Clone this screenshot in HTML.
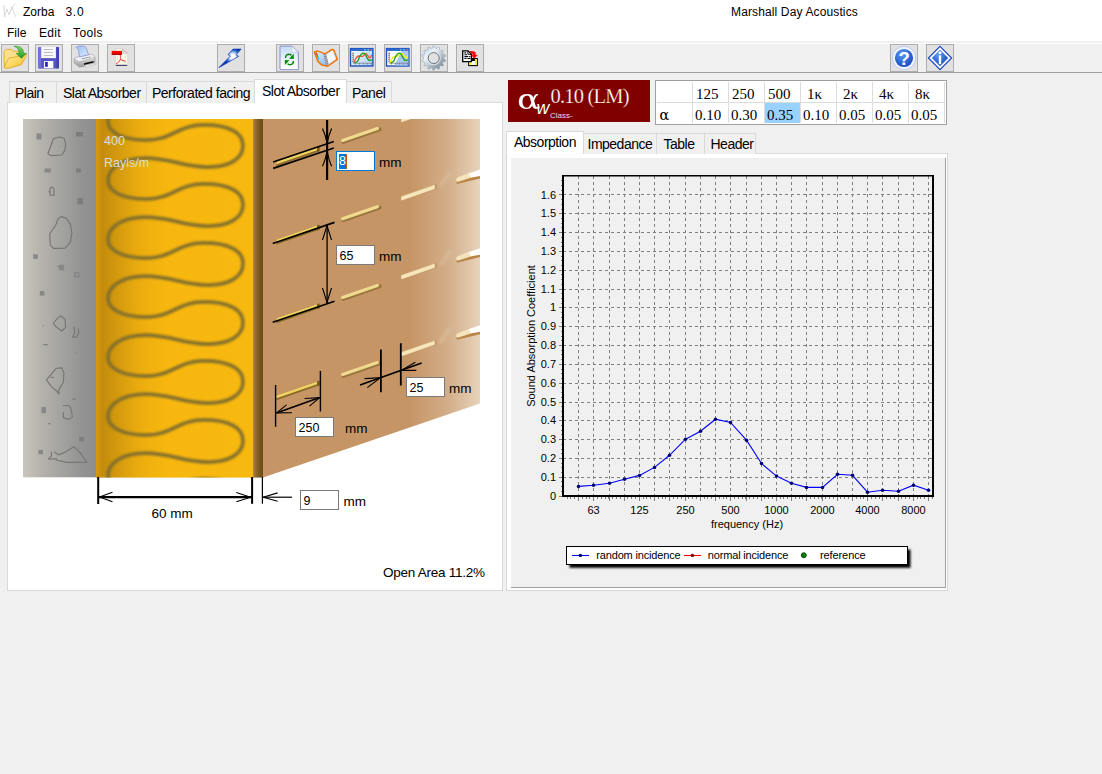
<!DOCTYPE html>
<html><head><meta charset="utf-8"><title>Zorba 3.0</title>
<style>
html,body{margin:0;padding:0;}
body{width:1102px;height:774px;background:#f0f0f0;position:relative;overflow:hidden;font-family:"Liberation Sans",sans-serif;font-size:14px;color:#000;}
.abs{position:absolute;}
#top{left:0;top:0;width:1102px;height:41px;background:#fff;border-bottom:2px solid #f0f0f0;box-shadow:0 1px 0 #fff;}
.ui{font-family:"Liberation Sans",sans-serif;font-size:12px;position:absolute;white-space:nowrap;}
#tbline{left:0;top:72px;width:1102px;height:1px;background:#a0a0a0;}
.tbtn{position:absolute;top:44px;width:26px;height:26px;background:#e1e1e1;border:1px solid #adadad;box-sizing:content-box;}
.tab{position:absolute;box-sizing:border-box;border:1px solid #d9d9d9;border-bottom:none;background:#f0f0f0;font-size:14px;white-space:nowrap;letter-spacing:-0.5px;}
.tab.sel{background:#fff;}
.tab span{position:absolute;}
.page{position:absolute;box-sizing:border-box;background:#fff;border:1px solid #d9d9d9;}
.inp{position:absolute;box-sizing:border-box;background:#fff;border:1px solid #7a7a7a;font-size:12.5px;}
.inp span{position:absolute;left:2.5px;top:2.7px;}
.lbl{position:absolute;font-size:13.5px;white-space:nowrap;}
</style></head><body>
<div id="top" class="abs"></div>
<div class="ui" style="left:23px;top:5px;">Zorba</div>
<div class="ui" style="left:65.5px;top:5px;letter-spacing:0.7px;">3.0</div>
<svg class="abs" style="left:3px;top:3px;" width="16" height="16" viewBox="0 0 16 16"><path d="M1 2 L1.6 14 L4 6 L6 12 L9 4 L12.5 1 M9 4 L10.5 9 L13 14" fill="none" stroke="#d4d4d0" stroke-width="0.9"/></svg>
<div class="ui" style="left:731px;top:5px;letter-spacing:0.13px;">Marshall Day Acoustics</div>
<div class="ui" style="left:7px;top:26px;">File</div>
<div class="ui" style="left:39px;top:26px;letter-spacing:0.3px;">Edit</div>
<div class="ui" style="left:73px;top:26px;letter-spacing:0.4px;">Tools</div>
<div id="tbline" class="abs"></div>
<!--TOOLBAR-->
<svg width="0" height="0" style="position:absolute"><defs>
<linearGradient id="gFold" x1="0" y1="0" x2="1" y2="1"><stop offset="0" stop-color="#fff3b0"/><stop offset="0.6" stop-color="#fbd45a"/><stop offset="1" stop-color="#e8a818"/></linearGradient>
<linearGradient id="gGreen" x1="0" y1="0" x2="0" y2="1"><stop offset="0" stop-color="#7fd66a"/><stop offset="1" stop-color="#1f9a1f"/></linearGradient>
<linearGradient id="gBolt" x1="1" y1="0" x2="0" y2="1"><stop offset="0" stop-color="#1d4fc4"/><stop offset="0.45" stop-color="#9cc4f4"/><stop offset="1" stop-color="#0a2ea0"/></linearGradient>
<linearGradient id="gPage" x1="0" y1="0" x2="1" y2="1"><stop offset="0" stop-color="#cfe0fa"/><stop offset="0.6" stop-color="#f4f8ff"/><stop offset="1" stop-color="#ffffff"/></linearGradient>
<radialGradient id="gHelp" cx="0.4" cy="0.3" r="0.8"><stop offset="0" stop-color="#5b9cf0"/><stop offset="0.6" stop-color="#2a62d0"/><stop offset="1" stop-color="#1a48b8"/></radialGradient>
<linearGradient id="gGear" x1="0" y1="0" x2="1" y2="1"><stop offset="0" stop-color="#e8eef4"/><stop offset="0.5" stop-color="#b4c0cc"/><stop offset="1" stop-color="#8a96a4"/></linearGradient>
<linearGradient id="gPrn" x1="0" y1="0" x2="0" y2="1"><stop offset="0" stop-color="#f4f4f4"/><stop offset="1" stop-color="#9a9a9a"/></linearGradient>
<linearGradient id="gPaper" x1="0" y1="0" x2="1" y2="1"><stop offset="0" stop-color="#9fc0f4"/><stop offset="1" stop-color="#d8ecff"/></linearGradient>
</defs></svg>
<!-- open -->
<div class="tbtn" style="left:1px;"><svg width="26" height="26" viewBox="1 1 26 26">
<path d="M3 7.5 L4.8 5.4 L10.5 5.4 L12.3 7.2 L19 7.2 L19 13 L8 14.5 L3.4 23.5 Z" fill="#fbe08c" stroke="#e4a41c" stroke-width="0.8" stroke-linejoin="round"/>
<path d="M7.8 14.1 L18.6 12.3 L25.4 9.6 L25.1 12.3 L20.4 20.7 L7.8 24.2 L3.9 24.2 L3.2 23 Z" fill="url(#gFold)" stroke="#e4a41c" stroke-width="0.8" stroke-linejoin="round"/>
<path d="M12.9 2.1 L18.6 2.7 Q21.6 4.5 22.2 6.3 L22.5 9.3 L25.4 9.3 L20.4 14.4 L15 9.3 L18 9.3 L17.7 6.9 Q17.2 5 16.2 3.9 Z" fill="url(#gGreen)" stroke="#1c8c1c" stroke-width="0.5" stroke-linejoin="round"/>
</svg></div>
<!-- save -->
<div class="tbtn" style="left:35px;"><svg width="26" height="26" viewBox="1 1 26 26">
<path d="M3.2 4.2 Q3.2 3 4.4 3 L22.7 3 Q23.9 3 23.9 4.2 L23.9 23.3 Q23.9 24.5 22.7 24.5 L4.4 24.5 Q3.2 24.5 3.2 23.3 Z" fill="#5555c2"/>
<path d="M3.2 4.2 Q3.2 3 4.4 3 L6.2 3 L6.2 24.5 L4.4 24.5 Q3.2 24.5 3.2 23.3 Z" fill="#7272d8"/>
<path d="M21.6 3 L22.7 3 Q23.9 3 23.9 4.2 L23.9 23.3 Q23.9 24.5 22.7 24.5 L21.6 24.5 Z" fill="#4040aa"/>
<rect x="6.2" y="3" width="14.7" height="11.1" fill="#f8f8fb"/>
<rect x="8.9" y="5" width="9" height="0.9" fill="#b4b4bc"/><rect x="8.9" y="8" width="9" height="0.9" fill="#b4b4bc"/><rect x="8.9" y="11" width="9" height="0.9" fill="#b4b4bc"/>
<rect x="8.9" y="17.1" width="9.3" height="7" fill="#f4f4fa"/>
<path d="M13 17.1 L18.2 17.1 L18.2 24.1 L11.5 24.1 Z" fill="#fdfdfd"/>
<rect x="10.1" y="18" width="2.7" height="4.8" fill="#2828a0"/>
</svg></div>
<!-- print -->
<div class="tbtn" style="left:71px;"><svg width="26" height="26" viewBox="1 1 26 26">
<path d="M3.1 14.7 L8.5 12.3 L21.1 10.2 L24 12.9 L24 18.3 L12.7 22.5 L8.5 23 L3.1 18.9 Z" fill="url(#gPrn)" stroke="#8c8c8c" stroke-width="0.6" stroke-linejoin="round"/>
<path d="M3.1 14.7 L8.5 12.3 L21.1 10.2 L24 12.9 L11.5 16.8 L8 17.6 Z" fill="#f0f0f0" stroke="#a8a8a8" stroke-width="0.4" stroke-linejoin="round"/>
<path d="M4.9 3.3 L8.2 2.1 L13.6 2.1 Q15 3.5 15.7 5.1 L17.5 10.8 L8.5 12.9 L7.6 6.9 Q7.4 5.6 6.7 5.1 Z" fill="url(#gPaper)" stroke="#8484d8" stroke-width="0.7" stroke-linejoin="round"/>
<path d="M10.6 14.3 L19.3 12.4 L19.9 13.2 L11.2 15.2 Z" fill="#9aa0b4"/>
<path d="M13 19.2 L22.6 17.1 L22.6 18.6 L13 21 Z" fill="#0a0a0a"/>
<path d="M12.7 21.4 L25.2 18.9 L25.2 20.3 L15.7 23.4 Z" fill="#e4e4e4" stroke="#a0a0a0" stroke-width="0.3"/>
</svg></div>
<!-- pdf -->
<div class="tbtn" style="left:107px;"><svg width="26" height="26" viewBox="1 1 26 26">
<path d="M8.3 4.8 L15.4 4.8 L20.8 9.3 L20.8 21.6 L8.3 21.6 Z" fill="#fdf9ea" stroke="#c4c4c0" stroke-width="0.6"/>
<path d="M15.2 4.9 L15.2 9.3 L20.6 9.3 Z" fill="#d8d8d8" stroke="#a8a8a8" stroke-width="0.4"/>
<rect x="8.9" y="20.8" width="11.2" height="1" fill="#20205c"/>
<rect x="4.7" y="6.9" width="10.2" height="3.9" fill="#f20000"/><rect x="4.7" y="9.8" width="10.2" height="1" fill="#a80000"/>
<path d="M13.1 11 C13.6 13 13.8 14 13.4 15.3 C12.5 17.5 10.8 19 9.2 19.6 M13.4 15.3 C15 16.4 16.8 17 18.6 17.2" fill="none" stroke="#e83030" stroke-width="1"/>
<path d="M10 12.5 L10.4 15.5 M17 19 L19 18.6 M18.5 11.5 L18.7 14" stroke="#8cc88c" stroke-width="0.6" opacity="0.7"/>
</svg></div>
<!-- bolt -->
<div class="tbtn" style="left:217px;"><svg width="26" height="26" viewBox="1 1 26 26">
<defs><radialGradient id="gBolt2" gradientUnits="userSpaceOnUse" cx="15.8" cy="12.6" r="9"><stop offset="0" stop-color="#ffffff"/><stop offset="0.2" stop-color="#ffffff"/><stop offset="0.42" stop-color="#bcd8f8"/><stop offset="0.72" stop-color="#2a66d0"/><stop offset="1" stop-color="#0030b0"/></radialGradient></defs>
<path d="M16.1 5.1 L24.1 5.1 L19.1 10.8 L21.7 12.3 L2 23.6 L13.4 12 L11 10.5 Z" fill="url(#gBolt2)" stroke="#0a34b0" stroke-width="0.7" stroke-linejoin="miter"/>
</svg></div>
<!-- refresh -->
<div class="tbtn" style="left:276px;"><svg width="26" height="26" viewBox="1 1 26 26">
<defs><linearGradient id="gPg2" x1="0" y1="0" x2="0" y2="1"><stop offset="0" stop-color="#c4daf8"/><stop offset="0.7" stop-color="#f4f8ff"/><stop offset="1" stop-color="#ffffff"/></linearGradient></defs>
<path d="M4 2.1 L15.7 2.1 L22.4 8.1 L22.4 25.6 L4 25.6 Z" fill="url(#gPg2)" stroke="#8888c4" stroke-width="0.9"/>
<path d="M15.7 2.3 Q16.5 6 15.5 8.3 Q19 7.4 22.2 8.2 Z" fill="#f4f8ff" stroke="#a8acd8" stroke-width="0.4"/>
<path d="M9.6 14 Q9.4 10.4 13.2 10.3 Q14.6 10.4 15.4 11.2" fill="none" stroke="#0c8a0c" stroke-width="1.5"/>
<path d="M13 14.7 L17.6 9.8 L17.9 15 Z" fill="#0c8a0c"/>
<path d="M17.4 17 Q17.6 20.6 13.8 20.7 Q12.4 20.6 11.6 19.8" fill="none" stroke="#0c8a0c" stroke-width="1.5"/>
<path d="M8.8 15.9 L13.5 16.2 L8.9 21.1 Z" fill="#0c8a0c"/>
</svg></div>
<!-- book -->
<div class="tbtn" style="left:312px;"><svg width="26" height="26" viewBox="1 1 26 26">
<defs><linearGradient id="gBk" x1="0" y1="0" x2="0.3" y2="1"><stop offset="0" stop-color="#eef4fc"/><stop offset="1" stop-color="#8cbcf0"/></linearGradient></defs>
<path d="M2.3 8.1 L5 6.9 L13.4 9.9 L19.9 5.4 L21.7 5.7 L25.3 15.3 L15.7 22.2 L9.8 21 L5.6 17.1 L3.8 11.7 Z" fill="url(#gBk)" stroke="#f07404" stroke-width="1.5" stroke-linejoin="round"/>
<path d="M14.2 10.6 L20.6 6.6 L24 15 L16 20.8 Z" fill="#f2f6fd"/>
<path d="M11.3 10.2 L14 9.9 L16.6 19.9 L13.9 20.4 Z" fill="#787884"/>
<path d="M11.6 11.6 l2.4 -.5 M12.1 13.5 l2.4 -.5 M12.6 15.4 l2.4 -.5 M13.1 17.3 l2.4 -.5 M13.6 19.2 l2.4 -.5" stroke="#dcdce6" stroke-width="0.8"/>
<path d="M4.2 8.6 L5.2 11" stroke="#e02020" stroke-width="1.3"/><path d="M5.2 11 L6 13.4" stroke="#30b030" stroke-width="1.3"/><path d="M6 13.4 L6.8 15.6" stroke="#50a8f0" stroke-width="1.3"/>
</svg></div>
<!-- chart1 -->
<div class="tbtn" style="left:348px;"><svg width="26" height="26" viewBox="1 1 26 26">
<defs><linearGradient id="gWin" x1="0" y1="0" x2="1" y2="0.6"><stop offset="0" stop-color="#ffffff"/><stop offset="1" stop-color="#b4d4f8"/></linearGradient></defs>
<rect x="2.5" y="4.6" width="22.4" height="17.4" fill="url(#gWin)" stroke="#1c50b8" stroke-width="1.4"/>
<rect x="2.5" y="4.6" width="22.4" height="2.4" fill="#2c6cd0"/>
<rect x="16.3" y="4.9" width="1.4" height="1.7" fill="#7cc0f4"/><rect x="19.5" y="4.9" width="1.4" height="1.7" fill="#7cc0f4"/><rect x="22.4" y="4.9" width="1.5" height="1.7" fill="#f06838"/>
<path d="M5.3 8.1 L5.3 19.2 L24.3 19.2" fill="none" stroke="#808080" stroke-width="0.8"/>
<path d="M4.2 9.5 h1.2 M4.2 11.5 h1.2 M4.2 13.5 h1.2 M4.2 15.5 h1.2 M4.2 17.5 h1.2 M7.4 19.2 v1.3 M11.4 19.2 v1.3 M15.4 19.2 v1.3 M19.4 19.2 v1.3 M23.4 19.2 v1.3" stroke="#707070" stroke-width="0.8"/>
<path d="M6.1 18 C7 16.5 7.6 14.5 8.5 13.5 C9.3 12.6 9.8 12.2 10.6 12 C12 11.8 13.5 12.8 14.8 12.3 C16.2 11.8 16.8 9.5 18.1 9.6 C19.6 9.8 20.4 13.6 21.7 13.8 C22.6 13.9 23 12.3 23.4 11.4" fill="none" stroke="#ff5030" stroke-width="1.3" stroke-linecap="round"/>
<path d="M7 18.6 C8 18.4 9 18 9.7 17.1 C10.6 15.9 10.8 14.2 11.5 12.9 C12.3 11.4 13.2 9.8 14.5 9.3 C15.4 9 16.3 9.2 16.9 9.9 C18.2 11.4 19 14.8 20.5 15.9 C21.4 16.5 22.6 16.3 23.4 16.2" fill="none" stroke="#18a018" stroke-width="1.3" stroke-linecap="round"/>
</svg></div>
<!-- chart2 -->
<div class="tbtn" style="left:384px;"><svg width="26" height="26" viewBox="1 1 26 26">
<rect x="2.5" y="4.6" width="22.4" height="17.4" fill="#ffffff" stroke="#1c50b8" stroke-width="1.4"/>
<path d="M10.5 21.4 L13 16 L16.5 9.5 L17.5 7 L24.3 7 L24.3 21.4 Z" fill="#a8c8f0"/>
<rect x="2.5" y="4.6" width="22.4" height="2.4" fill="#2c6cd0"/>
<rect x="16.3" y="4.9" width="1.4" height="1.7" fill="#7cc0f4"/><rect x="19.5" y="4.9" width="1.4" height="1.7" fill="#7cc0f4"/><rect x="22.4" y="4.9" width="1.5" height="1.7" fill="#f06838"/>
<path d="M5.3 8.1 L5.3 19.2 L24.3 19.2" fill="none" stroke="#808080" stroke-width="0.8"/>
<path d="M4.2 9.5 h1.2 M4.2 11.5 h1.2 M4.2 13.5 h1.2 M4.2 15.5 h1.2 M4.2 17.5 h1.2 M7.4 19.2 v1.3 M11.4 19.2 v1.3 M15.4 19.2 v1.3 M19.4 19.2 v1.3 M23.4 19.2 v1.3" stroke="#707070" stroke-width="0.8"/>
<path d="M6.1 18.6 C7 17 7.8 14.8 8.8 13.6 C9.6 12.7 10.4 12.3 11.4 12.4 C12.8 12.4 14 12.4 15 11.5 C16 10.6 16.8 9.4 17.8 9.6 C19.4 10 20.6 13.6 22 14 C22.8 14 23.2 12.8 23.6 12" fill="none" stroke="#f8f010" stroke-width="1.5" stroke-linecap="round"/>
<path d="M7 18.8 C8 18.5 9 18.1 9.7 17.2 C10.6 16 10.8 14.2 11.5 12.9 C12.3 11.4 13.2 9.8 14.5 9.3 C15.4 9 16.3 9.2 16.9 9.9 C18.2 11.4 19 14.8 20.5 15.9 C21.4 16.5 22.6 16.3 23.4 16.2" fill="none" stroke="#18a018" stroke-width="1.3" stroke-linecap="round"/>
</svg></div>
<!-- gear -->
<div class="tbtn" style="left:420px;"><svg width="26" height="26" viewBox="1 1 26 26">
<defs><linearGradient id="gGear2" x1="0.15" y1="0.1" x2="0.85" y2="0.9"><stop offset="0" stop-color="#c8dcf0"/><stop offset="0.3" stop-color="#eef4fa"/><stop offset="0.6" stop-color="#b8c4d0"/><stop offset="1" stop-color="#7c8690"/></linearGradient></defs>
<g transform="translate(13.7 14.1)">
<path d="M10.20 0.00 L10.15 1.01 L11.84 1.93 L11.51 3.40 L9.58 3.50 L9.19 4.43 L8.71 5.31 L9.83 6.88 L8.89 8.06 L7.11 7.31 L6.36 7.97 L5.54 8.56 L5.88 10.46 L4.52 11.12 L3.24 9.67 L2.27 9.94 L1.28 10.12 L0.75 11.98 L-0.75 11.98 L-1.28 10.12 L-2.27 9.94 L-3.24 9.67 L-4.52 11.12 L-5.88 10.46 L-5.54 8.56 L-6.36 7.97 L-7.11 7.31 L-8.89 8.06 L-9.83 6.88 L-8.71 5.31 L-9.19 4.43 L-9.58 3.50 L-11.51 3.40 L-11.84 1.93 L-10.15 1.01 L-10.20 0.00 L-10.15 -1.01 L-11.84 -1.93 L-11.51 -3.40 L-9.58 -3.50 L-9.19 -4.43 L-8.71 -5.31 L-9.83 -6.88 L-8.89 -8.06 L-7.11 -7.31 L-6.36 -7.97 L-5.54 -8.56 L-5.88 -10.46 L-4.52 -11.12 L-3.24 -9.67 L-2.27 -9.94 L-1.28 -10.12 L-0.75 -11.98 L0.75 -11.98 L1.28 -10.12 L2.27 -9.94 L3.24 -9.67 L4.52 -11.12 L5.88 -10.46 L5.54 -8.56 L6.36 -7.97 L7.11 -7.31 L8.89 -8.06 L9.83 -6.88 L8.71 -5.31 L9.19 -4.43 L9.58 -3.50 L11.51 -3.40 L11.84 -1.93 L10.15 -1.01 Z" fill="url(#gGear2)" stroke="#98a4b0" stroke-width="0.6" stroke-linejoin="round"/>
<circle r="6.6" fill="none" stroke="#dfe8f0" stroke-width="1.2" opacity="0.8"/>
<circle r="5.5" fill="#e1e1e1" stroke="#5c6268" stroke-width="0.8"/>
</g></svg></div>
<!-- export -->
<div class="tbtn" style="left:456px;"><svg width="26" height="26" viewBox="1 1 26 26">
<rect x="12.7" y="14.6" width="8.6" height="7" fill="#fff" stroke="#000" stroke-width="1.1"/>
<rect x="13.2" y="15.2" width="1.6" height="5.9" fill="#f8f000"/><rect x="19.2" y="15.2" width="1.6" height="5.9" fill="#f8f000"/>
<rect x="14.9" y="14.6" width="4" height="2.4" fill="#000"/>
<path d="M6.7 6.9 L12.1 6.9 L15.4 10.2 L15.4 17.6 L6.7 17.6 Z" fill="#fff" stroke="#000" stroke-width="1.3" stroke-linejoin="miter"/>
<path d="M11.9 7 L11.9 10.3 L15.3 10.3" fill="none" stroke="#000" stroke-width="0.9"/>
<path d="M8.4 8.9 H10.2 M8.4 10.7 H11.1 M8.4 12.6 H12.3 M13.2 12.6 H14.4 M8.4 14.5 H10.5 M11.5 14.5 H14.4" stroke="#000" stroke-width="1.1"/>
<path d="M14.2 7 Q19 6.7 19.6 8.6 L19.7 10.9 L21.8 10.9 L18.2 14.6 L15 10.9 L16.8 10.9 Q16.9 9 14.2 8.7 Z" fill="#ff0000"/>
</svg></div>
<!-- help -->
<div class="tbtn" style="left:890px;"><svg width="26" height="26" viewBox="1 1 26 26">
<circle cx="14" cy="14" r="11.6" fill="#f2f5fc" stroke="#a8bcec" stroke-width="0.7"/>
<circle cx="14" cy="14" r="9.1" fill="url(#gHelp)"/>
<text x="14.1" y="20.6" text-anchor="middle" font-family="Liberation Sans, sans-serif" font-weight="bold" font-size="18.5" fill="#fff">?</text>
</svg></div>
<!-- info -->
<div class="tbtn" style="left:926px;"><svg width="26" height="26" viewBox="1 1 26 26">
<path d="M14 2.4 L25.6 14 L14 25.6 L2.4 14 Z" fill="#f8f8fc" stroke="#1c48c0" stroke-width="1.2"/>
<path d="M14 5.8 L22.2 14 L14 22.2 L5.8 14 Z" fill="url(#gHelp)"/>
<circle cx="14" cy="8.7" r="1.5" fill="#fff"/><rect x="12.8" y="11.4" width="2.4" height="8.8" fill="#fff"/>
</svg></div>

<!--/TOOLBAR-->
<!--LEFTTABS-->
<div class="page" style="left:7px;top:102px;width:496px;height:489px;"></div>
<div class="tab" style="left:9px;top:81px;width:48px;height:22px;"><span style="left:5px;top:3px;">Plain</span></div>
<div class="tab" style="left:56px;top:81px;width:91px;height:22px;"><span style="left:6px;top:3px;">Slat Absorber</span></div>
<div class="tab" style="left:146px;top:81px;width:109px;height:22px;"><span style="left:5px;top:3px;">Perforated facing</span></div>
<div class="tab" style="left:346px;top:81px;width:46px;height:22px;"><span style="left:5px;top:3px;">Panel</span></div>
<div class="tab sel" style="left:254px;top:79px;width:93px;height:24px;"><span style="left:7px;top:2.5px;">Slot Absorber</span></div>

<!--/LEFTTABS-->
<!--DRAWING-->
<svg class="abs" style="left:23px;top:119px;" width="457" height="359" viewBox="23 119 457 359">
<defs>
<linearGradient id="gConc" x1="0" x2="1" y1="0" y2="0"><stop offset="0" stop-color="#c9c6bd"/><stop offset="0.25" stop-color="#b5b2ab"/><stop offset="0.5" stop-color="#a4a4a0"/><stop offset="0.78" stop-color="#949494"/><stop offset="1" stop-color="#8c8c8c"/></linearGradient>
<linearGradient id="gYel" x1="0" x2="1" y1="0" y2="0"><stop offset="0" stop-color="#d8980e"/><stop offset="0.04" stop-color="#c48c0c"/><stop offset="0.15" stop-color="#d69c0e"/><stop offset="0.26" stop-color="#e8aa0e"/><stop offset="0.33" stop-color="#f0b00e"/><stop offset="0.45" stop-color="#f7b70f"/><stop offset="1" stop-color="#f7b810"/></linearGradient>
<linearGradient id="gEdge" x1="0" x2="1" y1="0" y2="0"><stop offset="0" stop-color="#aa7a44"/><stop offset="0.4" stop-color="#86622a"/><stop offset="0.7" stop-color="#72541a"/><stop offset="1" stop-color="#6c4c14"/></linearGradient>
<linearGradient id="gFace" gradientUnits="userSpaceOnUse" x1="262" x2="480" y1="0" y2="0"><stop offset="0" stop-color="#c69566"/><stop offset="0.68" stop-color="#c69566"/><stop offset="0.85" stop-color="#d2ad88"/><stop offset="1" stop-color="#e7d3bb"/></linearGradient>
<filter id="blur1" x="-5%" y="-5%" width="110%" height="110%"><feGaussianBlur stdDeviation="0.8"/></filter>
<filter id="blur2" x="-50%" y="-50%" width="200%" height="200%"><feGaussianBlur stdDeviation="1.6"/></filter><filter id="blur05"><feGaussianBlur stdDeviation="0.4"/></filter>
<clipPath id="cYel"><rect x="96" y="119" width="158" height="358.6"/></clipPath>
</defs>
<rect x="23" y="119" width="74" height="358.3" fill="url(#gConc)"/>
<rect x="36.5" y="133.5" width="5" height="6" fill="#888886"/>
<rect x="76" y="132" width="7" height="4.5" fill="#7d7d7d"/>
<rect x="44.5" y="168.5" width="6.5" height="4" fill="#888886"/>
<rect x="76" y="168.5" width="5" height="4" fill="#7d7d7d"/>
<rect x="77.5" y="198" width="5.5" height="6.5" fill="#7d7d7d"/>
<rect x="33.2" y="254.3" width="4.6" height="4.6" fill="#888886"/>
<rect x="58.8" y="264.7" width="5.4" height="5.7" fill="#888886"/>
<rect x="39.8" y="291" width="4.6" height="4.6" fill="#888886"/>
<rect x="41.4" y="407" width="4.6" height="6.2" fill="#888886"/>
<rect x="79.3" y="436.9" width="4.6" height="4.4" fill="#7d7d7d"/>
<rect x="38.4" y="449.9" width="4.6" height="4.4" fill="#888886"/>
<rect x="74.8" y="272.9" width="4" height="4" fill="none" stroke="#808080" stroke-width="1.2"/>
<path d="M47.9 153.8 L53.3 139 L58.8 137 L64.2 138.3 L65.7 143.7 L65 149.9 L61.9 155 L51 155.6 Z" fill="none" stroke="#747472" stroke-width="1.1" stroke-linejoin="round"/>
<path d="M49.9 188.6 L51.8 187 L53.8 188.6 L54.1 195.3 L50.2 195.3 Z M48.2 191.7 L49.9 191.7" fill="none" stroke="#747472" stroke-width="1.1" stroke-linejoin="round"/>
<path d="M61.1 216.6 L66.5 218.2 L70.4 224.4 L71.9 232.9 L70.4 242.2 L65 248.1 L53.3 248.4 L50.2 244.5 L49.8 233.7 L55.7 225.2 L58 219 Z" fill="none" stroke="#747472" stroke-width="1.1" stroke-linejoin="round"/>
<path d="M57.6 266.5 L58.8 266.5" fill="none" stroke="#747472" stroke-width="1.1" stroke-linejoin="round"/>
<path d="M53.3 323.3 L57.2 318.6 L60.6 315.8 L65 319.4 L65.7 327.1 L61.9 331 L56.4 327.1 Z" fill="none" stroke="#747472" stroke-width="1.1" stroke-linejoin="round"/>
<path d="M74.3 326.4 L74.6 333.3 L72.7 337.2 L76.6 337.2 L78.9 332.6 L78.1 328.7" fill="none" stroke="#747472" stroke-width="1.1" stroke-linejoin="round"/>
<path d="M43.2 326 L44 326 M43.3 344.7 L47.9 344.7 M76.2 352.7 L77 352.7 M72.7 399 L75.6 399 M48.3 423.8 L50.8 423.8" fill="none" stroke="#747472" stroke-width="1.1" stroke-linejoin="round"/>
<path d="M46.4 379.8 L56.4 368.2 L61.9 367.9 L63.9 372.9 L63.4 382.2 L58.8 389.9 L58.8 394.3 L57.2 391.5 L51.8 386.8 Z M50.2 377.5 L54.1 377.2" fill="none" stroke="#747472" stroke-width="1.1" stroke-linejoin="round"/>
<path d="M63 405.5 L68.8 405.5 L70.6 407.8 L71.7 412.4 L72.3 417.1 L68.8 419.4 L63.6 417.7 L63.3 412.4" fill="none" stroke="#747472" stroke-width="1.1" stroke-linejoin="round"/>
<path d="M51.2 451.7 L51.6 455.5 L48.5 459 L56 458.7 L57.2 460.3 L66.5 462.4 L86.9 462.2 L80.5 453.1 L73.7 446.7 L66.5 451.4 L58.4 454.9 L54.3 451.7" fill="none" stroke="#747472" stroke-width="1.1" stroke-linejoin="round"/>
<rect x="96" y="119" width="158" height="358.6" fill="url(#gYel)"/>
<g clip-path="url(#cYel)"><path d="M108,62.6 C108,74.1 124,81.1 146,81.1 C172,81.1 178,65.9 204,65.9 C229,65.9 243,73.6 243,86.6 C243,100.1 229,108.1 208,108.1 C182,108.1 172,99.1 145,99.1 C123,99.1 108,108.6 108,121.6 C108,133.1 124,140.1 146,140.1 C172,140.1 178,124.9 204,124.9 C229,124.9 243,132.6 243,145.6 C243,159.1 229,167.1 208,167.1 C182,167.1 172,158.1 145,158.1 C123,158.1 108,167.6 108,180.6 C108,192.1 124,199.1 146,199.1 C172,199.1 178,183.9 204,183.9 C229,183.9 243,191.6 243,204.6 C243,218.1 229,226.1 208,226.1 C182,226.1 172,217.1 145,217.1 C123,217.1 108,226.6 108,239.6 C108,251.1 124,258.1 146,258.1 C172,258.1 178,242.9 204,242.9 C229,242.9 243,250.6 243,263.6 C243,277.1 229,285.1 208,285.1 C182,285.1 172,276.1 145,276.1 C123,276.1 108,285.6 108,298.6 C108,310.1 124,317.1 146,317.1 C172,317.1 178,301.9 204,301.9 C229,301.9 243,309.6 243,322.6 C243,336.1 229,344.1 208,344.1 C182,344.1 172,335.1 145,335.1 C123,335.1 108,344.6 108,357.6 C108,369.1 124,376.1 146,376.1 C172,376.1 178,360.9 204,360.9 C229,360.9 243,368.6 243,381.6 C243,395.1 229,403.1 208,403.1 C182,403.1 172,394.1 145,394.1 C123,394.1 108,403.6 108,416.6 C108,428.1 124,435.1 146,435.1 C172,435.1 178,419.9 204,419.9 C229,419.9 243,427.6 243,440.6 C243,454.1 229,462.1 208,462.1 C182,462.1 172,453.1 145,453.1 C123,453.1 108,462.6 108,475.6 C108,487.1 124,494.1 146,494.1 C172,494.1 178,478.9 204,478.9 C229,478.9 243,486.6 243,499.6 C243,513.1 229,521.1 208,521.1 C182,521.1 172,512.1 145,512.1 C123,512.1 108,521.6 108,534.6" fill="none" stroke="#806e2e" stroke-width="3.7" filter="url(#blur1)" opacity="0.95"/></g>
<rect x="253.2" y="119" width="10" height="358.6" fill="url(#gEdge)"/>
<path d="M263 119 L480 119 L480 403.5 L263 477.6 Z" fill="url(#gFace)"/>
<path d="M449.5 95.3 L441 107.3" stroke="#ead8c0" stroke-width="4" opacity="0.28" filter="url(#blur2)" stroke-linecap="round"/>
<path d="M276.5 161.38 L319.5 146.55 L319.5 151.35 L276.5 166.18 Z" fill="#8a6a26" />
<path d="M276.5 161.38 L317.0 147.41 L317.0 150.31 L276.5 164.28 Z" fill="#f0d264" />
<path d="M317.0 147.41 L319.5 146.55 L319.5 151.35 L317.0 152.21 Z" fill="#7c5c1a" />
<path d="M343.4 142.10 L379.8 129.24" stroke="#98743c" stroke-width="3.6" stroke-linecap="round" filter="url(#blur05)"/>
<path d="M342.6 140.48 L377.4 128.47" stroke="#f0da90" stroke-width="3.1" stroke-linecap="round"/>
<path d="M402.0 118.28 L436.2 106.49 L436.2 110.79 L402.0 122.58 Z" fill="#c09464" stroke="#c09464" stroke-width="0.6" stroke-linejoin="round"/>
<path d="M401.5 118.46 L434.5 107.07 L434.5 110.57 L401.5 121.96 Z" fill="#f6e6ba" stroke="#f6e6ba" stroke-width="0.6" stroke-linejoin="round"/>
<path d="M456.3 102.48 L457.0 105.68 L480.0 100.17 L480.0 97.38 L471.0 98.88 L458.0 103.48 Z" fill="#b98648" />
<path d="M456.0 102.28 L457.5 99.58 L470.5 94.65 L472.0 98.84 L457.8 103.33 Z" fill="#f5e4bc" stroke="#f5e4bc" stroke-width="0.6" stroke-linejoin="round"/>
<path d="M468.5 95.24 L480.0 91.17 L480.0 97.78 L471.3 99.18 Z" fill="#ffffff" />
<path d="M449.5 173.5 L441 185.5" stroke="#ead8c0" stroke-width="4" opacity="0.28" filter="url(#blur2)" stroke-linecap="round"/>
<path d="M276.5 239.58 L319.5 224.75 L319.5 229.55 L276.5 244.38 Z" fill="#8a6a26" />
<path d="M276.5 239.58 L317.0 225.61 L317.0 228.51 L276.5 242.48 Z" fill="#f0d264" />
<path d="M317.0 225.61 L319.5 224.75 L319.5 229.55 L317.0 230.41 Z" fill="#7c5c1a" />
<path d="M343.4 220.30 L379.8 207.44" stroke="#98743c" stroke-width="3.6" stroke-linecap="round" filter="url(#blur05)"/>
<path d="M342.6 218.68 L377.4 206.67" stroke="#f0da90" stroke-width="3.1" stroke-linecap="round"/>
<path d="M402.0 196.49 L436.2 184.69 L436.2 188.99 L402.0 200.79 Z" fill="#c09464" stroke="#c09464" stroke-width="0.6" stroke-linejoin="round"/>
<path d="M401.5 196.66 L434.5 185.27 L434.5 188.77 L401.5 200.16 Z" fill="#f6e6ba" stroke="#f6e6ba" stroke-width="0.6" stroke-linejoin="round"/>
<path d="M456.3 180.68 L457.0 183.88 L480.0 178.38 L480.0 175.58 L471.0 177.08 L458.0 181.68 Z" fill="#b98648" />
<path d="M456.0 180.48 L457.5 177.78 L470.5 172.85 L472.0 177.04 L457.8 181.53 Z" fill="#f5e4bc" stroke="#f5e4bc" stroke-width="0.6" stroke-linejoin="round"/>
<path d="M468.5 173.44 L480.0 169.38 L480.0 175.98 L471.3 177.38 Z" fill="#ffffff" />
<path d="M449.5 252.2 L441 264.2" stroke="#ead8c0" stroke-width="4" opacity="0.28" filter="url(#blur2)" stroke-linecap="round"/>
<path d="M276.5 318.33 L319.5 303.50 L319.5 308.30 L276.5 323.13 Z" fill="#8a6a26" />
<path d="M276.5 318.33 L317.0 304.36 L317.0 307.26 L276.5 321.23 Z" fill="#f0d264" />
<path d="M317.0 304.36 L319.5 303.50 L319.5 308.30 L317.0 309.16 Z" fill="#7c5c1a" />
<path d="M343.4 299.05 L379.8 286.19" stroke="#98743c" stroke-width="3.6" stroke-linecap="round" filter="url(#blur05)"/>
<path d="M342.6 297.43 L377.4 285.42" stroke="#f0da90" stroke-width="3.1" stroke-linecap="round"/>
<path d="M402.0 275.24 L436.2 263.44 L436.2 267.74 L402.0 279.54 Z" fill="#c09464" stroke="#c09464" stroke-width="0.6" stroke-linejoin="round"/>
<path d="M401.5 275.41 L434.5 264.02 L434.5 267.52 L401.5 278.91 Z" fill="#f6e6ba" stroke="#f6e6ba" stroke-width="0.6" stroke-linejoin="round"/>
<path d="M456.3 259.43 L457.0 262.63 L480.0 257.12 L480.0 254.33 L471.0 255.83 L458.0 260.43 Z" fill="#b98648" />
<path d="M456.0 259.23 L457.5 256.53 L470.5 251.60 L472.0 255.79 L457.8 260.28 Z" fill="#f5e4bc" stroke="#f5e4bc" stroke-width="0.6" stroke-linejoin="round"/>
<path d="M468.5 252.19 L480.0 248.13 L480.0 254.73 L471.3 256.13 Z" fill="#ffffff" />
<path d="M449.5 329.3 L441 341.3" stroke="#ead8c0" stroke-width="4" opacity="0.28" filter="url(#blur2)" stroke-linecap="round"/>
<path d="M276.5 395.38 L319.5 380.55 L319.5 385.35 L276.5 400.18 Z" fill="#8a6a26" />
<path d="M276.5 395.38 L317.0 381.41 L317.0 384.31 L276.5 398.28 Z" fill="#f0d264" />
<path d="M317.0 381.41 L319.5 380.55 L319.5 385.35 L317.0 386.21 Z" fill="#7c5c1a" />
<path d="M343.4 376.10 L379.8 363.24" stroke="#98743c" stroke-width="3.6" stroke-linecap="round" filter="url(#blur05)"/>
<path d="M342.6 374.48 L377.4 362.47" stroke="#f0da90" stroke-width="3.1" stroke-linecap="round"/>
<path d="M402.0 352.29 L436.2 340.49 L436.2 344.79 L402.0 356.59 Z" fill="#c09464" stroke="#c09464" stroke-width="0.6" stroke-linejoin="round"/>
<path d="M401.5 352.46 L434.5 341.07 L434.5 344.57 L401.5 355.96 Z" fill="#f6e6ba" stroke="#f6e6ba" stroke-width="0.6" stroke-linejoin="round"/>
<path d="M456.3 336.48 L457.0 339.68 L480.0 334.18 L480.0 331.38 L471.0 332.88 L458.0 337.48 Z" fill="#b98648" />
<path d="M456.0 336.28 L457.5 333.58 L470.5 328.65 L472.0 332.84 L457.8 337.33 Z" fill="#f5e4bc" stroke="#f5e4bc" stroke-width="0.6" stroke-linejoin="round"/>
<path d="M468.5 329.24 L480.0 325.18 L480.0 331.77 L471.3 333.18 Z" fill="#ffffff" />
</svg><svg class="abs" style="left:8px;top:103px;" width="495" height="486" viewBox="8 103 495 486">
<g stroke="#000" stroke-width="1.7" fill="none" stroke-linecap="butt">
<path d="M273.2 162 L333.8 141.5 M273.2 168.4 L333.8 148"/>
<path d="M327.1 120 L327.1 180" stroke-width="2.2"/>
<path d="M322.5 128.6 Q325.5 135 327.1 143.5 Q328.7 135 331.6 128.6" stroke-width="1.2"/>
<path d="M322.5 166.2 Q325.5 160 327.1 150.5 Q328.7 160 331.6 166.2" stroke-width="1.2"/>
<path d="M272.7 243.5 L334.5 222.4 M272.7 322.3 L334.5 301.2"/>
<path d="M327.1 225 L327.1 303" stroke-width="1.3"/>
<path d="M322.5 240 L327 225.5 L331.5 240" stroke-width="1.1"/>
<path d="M322.5 288 L327 302.5 L331.5 288" stroke-width="1.1"/>
<path d="M275.6 385 L275.6 426.7 M320.4 371 L320.4 411.6" stroke-width="1.4"/>
<path d="M276.5 413 L319.7 397.6" stroke-width="1.6"/>
<path d="M286.5 404.9 L276.6 412.9 L292 412.7" stroke-width="1.1"/>
<path d="M304.6 398.5 L319.6 397.7 L309.5 406.1" stroke-width="1.1"/>
<path d="M380.9 349.5 L380.9 392.2 M400.8 343.2 L400.8 385.5" stroke-width="1.8"/>
<path d="M360 384.9 L421.7 363.1" stroke-width="1.6"/>
<path d="M364.5 378.6 L380.5 377.7 L367.3 387.6" stroke-width="1.1"/>
<path d="M415.4 362.2 L401.2 370.4 L416.3 370.4" stroke-width="1.1"/>
<path d="M252.1 477 L252.1 503.8" stroke-width="2"/>
<path d="M262.4 477 L262.4 503.8" stroke-width="1.2"/>
<path d="M262.4 497.2 L292 497.2" stroke-width="1.2"/>
<path d="M236.3 492.5 L250.6 497.2 L236.3 501.7" stroke-width="1.1"/>
<path d="M277.6 492.9 L263.2 497.2 L277.6 501.2" stroke-width="1.1"/>
<path d="M98.2 477 L98.2 504" stroke-width="2"/>
<path d="M98.2 497.1 L252 497.1" stroke-width="2.2"/>
<path d="M112.5 492.2 L99.5 497 L112.5 501.8" stroke-width="1.1"/>
</g></svg>
<div class="inp" style="left:336px;top:151px;width:39px;height:20px;border-color:#0078d7;"><span style="left:2px;top:2px;background:#0078d7;color:#fff;padding:0 0 1px 0;">8</span><i style="position:absolute;left:9px;top:2px;width:1px;height:15px;background:#c85010;"></i></div>
<div class="inp" style="left:336px;top:245px;width:39px;height:20px;"><span>65</span></div>
<div class="inp" style="left:295px;top:417px;width:39px;height:20px;"><span>250</span></div>
<div class="inp" style="left:406px;top:377px;width:39px;height:20px;"><span>25</span></div>
<div class="inp" style="left:300px;top:490px;width:39px;height:20px;"><span>9</span></div>
<div class="lbl" style="left:379px;top:154.5px;">mm</div>
<div class="lbl" style="left:379px;top:248.5px;">mm</div>
<div class="lbl" style="left:345px;top:421px;">mm</div>
<div class="lbl" style="left:449px;top:381px;">mm</div>
<div class="lbl" style="left:343.5px;top:493.7px;">mm</div>
<div class="lbl" style="left:151.5px;top:506px;">60 mm</div>
<div class="lbl" style="left:383px;top:565px;letter-spacing:-0.25px;">Open Area 11.2%</div>
<div class="lbl" style="left:104px;top:134px;color:#dcdcdc;font-size:12.5px;">400</div>
<div class="lbl" style="left:104px;top:156px;color:#dcdcdc;font-size:12.5px;">Rayls/m</div>
<!--/DRAWING-->
<!--RIGHT-->
<div class="abs" style="left:508px;top:80px;width:141.5px;height:42px;background:#800000;"></div>
<div class="abs" style="left:515.5px;top:87px;font-family:'DejaVu Math TeX Gyre','DejaVu Serif',serif;font-size:28.5px;color:#fff;line-height:1;transform:scaleX(1.22);transform-origin:0 0;">α</div>
<div class="abs" style="left:536.5px;top:99.5px;font-family:'Liberation Sans',sans-serif;font-style:italic;font-size:17.7px;color:#fff;line-height:1;">w</div>
<div class="abs" style="left:550.5px;top:86.2px;font-family:'Liberation Serif',serif;font-size:20.5px;letter-spacing:-0.8px;color:#fff;-webkit-text-stroke:0.25px #800000;line-height:1;white-space:nowrap;">0.10 (LM)</div>
<div class="abs" style="left:550px;top:111.5px;font-size:8px;color:#e8d8f0;line-height:1;white-space:nowrap;">Class-</div>
<div class="abs" style="left:655px;top:80px;width:292px;height:45px;box-sizing:border-box;border:1px solid #a0a0a0;background:#fff;"></div>
<div class="abs" style="left:657px;top:102px;width:288px;height:1px;background:#dcdcdc;"></div>
<div class="abs" style="left:692px;top:82px;width:1px;height:41px;background:#dcdcdc;"></div>
<div class="abs" style="left:728px;top:82px;width:1px;height:41px;background:#dcdcdc;"></div>
<div class="abs" style="left:764px;top:82px;width:1px;height:41px;background:#dcdcdc;"></div>
<div class="abs" style="left:800px;top:82px;width:1px;height:41px;background:#dcdcdc;"></div>
<div class="abs" style="left:836px;top:82px;width:1px;height:41px;background:#dcdcdc;"></div>
<div class="abs" style="left:872px;top:82px;width:1px;height:41px;background:#dcdcdc;"></div>
<div class="abs" style="left:908px;top:82px;width:1px;height:41px;background:#dcdcdc;"></div>
<div class="abs" style="left:944px;top:82px;width:1px;height:41px;background:#dcdcdc;"></div>
<div class="abs" style="left:765px;top:103px;width:35px;height:20px;background:#99d1ff;"></div>
<div style="position:absolute;font-family:'Liberation Serif',serif;font-size:15px;line-height:1;white-space:nowrap;left:696px;top:87px;">125</div>
<div style="position:absolute;font-family:'Liberation Serif',serif;font-size:15px;line-height:1;white-space:nowrap;left:695px;top:108px;">0.10</div>
<div style="position:absolute;font-family:'Liberation Serif',serif;font-size:15px;line-height:1;white-space:nowrap;left:732px;top:87px;">250</div>
<div style="position:absolute;font-family:'Liberation Serif',serif;font-size:15px;line-height:1;white-space:nowrap;left:731px;top:108px;">0.30</div>
<div style="position:absolute;font-family:'Liberation Serif',serif;font-size:15px;line-height:1;white-space:nowrap;left:768px;top:87px;">500</div>
<div style="position:absolute;font-family:'Liberation Serif',serif;font-size:15px;line-height:1;white-space:nowrap;left:767px;top:108px;">0.35</div>
<div style="position:absolute;font-family:'Liberation Serif',serif;font-size:15px;line-height:1;white-space:nowrap;left:807px;top:87px;">1κ</div>
<div style="position:absolute;font-family:'Liberation Serif',serif;font-size:15px;line-height:1;white-space:nowrap;left:803px;top:108px;">0.10</div>
<div style="position:absolute;font-family:'Liberation Serif',serif;font-size:15px;line-height:1;white-space:nowrap;left:843px;top:87px;">2κ</div>
<div style="position:absolute;font-family:'Liberation Serif',serif;font-size:15px;line-height:1;white-space:nowrap;left:839px;top:108px;">0.05</div>
<div style="position:absolute;font-family:'Liberation Serif',serif;font-size:15px;line-height:1;white-space:nowrap;left:879px;top:87px;">4κ</div>
<div style="position:absolute;font-family:'Liberation Serif',serif;font-size:15px;line-height:1;white-space:nowrap;left:875px;top:108px;">0.05</div>
<div style="position:absolute;font-family:'Liberation Serif',serif;font-size:15px;line-height:1;white-space:nowrap;left:915px;top:87px;">8κ</div>
<div style="position:absolute;font-family:'Liberation Serif',serif;font-size:15px;line-height:1;white-space:nowrap;left:911px;top:108px;">0.05</div>
<div style="position:absolute;font-family:'Liberation Serif',serif;font-size:15px;line-height:1;white-space:nowrap;left:659px;top:108.5px;font-size:14.5px;font-family:'DejaVu Math TeX Gyre',serif;">α</div>
<div class="page" style="left:506px;top:153px;width:442px;height:438px;"></div>
<div class="abs" style="left:511px;top:158px;width:435px;height:430px;box-sizing:border-box;background:#f0f0f0;border-right:1px solid #a0a0a0;border-bottom:1px solid #a0a0a0;"></div>
<div class="tab" style="left:583px;top:133px;width:74px;height:21px;"><span style="left:3.5px;top:2px;">Impedance</span></div>
<div class="tab" style="left:656px;top:133px;width:49px;height:21px;"><span style="left:6.5px;top:2px;">Table</span></div>
<div class="tab" style="left:704px;top:133px;width:52px;height:21px;"><span style="left:5.5px;top:2px;">Header</span></div>
<div class="tab sel" style="left:506px;top:131px;width:78px;height:23px;"><span style="left:7px;top:2px;">Absorption</span></div>
<svg class="abs" style="left:512px;top:159px;" width="432" height="427" viewBox="512 159 432 427" font-family="Liberation Sans, sans-serif" font-size="11">
<path d="M578.5 176 V496 M593.5 176 V496 M609.5 176 V496 M624.5 176 V496 M639.5 176 V496 M654.5 176 V496 M669.5 176 V496 M685.5 176 V496 M700.5 176 V496 M715.5 176 V496 M730.5 176 V496 M746.5 176 V496 M761.5 176 V496 M776.5 176 V496 M791.5 176 V496 M806.5 176 V496 M822.5 176 V496 M837.5 176 V496 M852.5 176 V496 M867.5 176 V496 M882.5 176 V496 M898.5 176 V496 M913.5 176 V496 M928.5 176 V496 M563 477.5 H933 M563 458.5 H933 M563 439.5 H933 M563 420.5 H933 M563 402.5 H933 M563 383.5 H933 M563 364.5 H933 M563 345.5 H933 M563 326.5 H933 M563 307.5 H933 M563 289.5 H933 M563 270.5 H933 M563 251.5 H933 M563 232.5 H933 M563 213.5 H933 M563 194.5 H933" stroke="#808080" stroke-width="1" stroke-dasharray="3 3" fill="none" shape-rendering="crispEdges"/>
<path d="M559 496.5 H563 M559 477.5 H563 M559 458.5 H563 M559 439.5 H563 M559 420.5 H563 M559 402.5 H563 M559 383.5 H563 M559 364.5 H563 M559 345.5 H563 M559 326.5 H563 M559 307.5 H563 M559 289.5 H563 M559 270.5 H563 M559 251.5 H563 M559 232.5 H563 M559 213.5 H563 M559 194.5 H563 M560.5 496.5 H563 M560.5 491.5 H563 M560.5 486.5 H563 M560.5 481.5 H563 M560.5 477.5 H563 M560.5 472.5 H563 M560.5 467.5 H563 M560.5 463.5 H563 M560.5 458.5 H563 M560.5 453.5 H563 M560.5 449.5 H563 M560.5 444.5 H563 M560.5 439.5 H563 M560.5 434.5 H563 M560.5 430.5 H563 M560.5 425.5 H563 M560.5 420.5 H563 M560.5 416.5 H563 M560.5 411.5 H563 M560.5 406.5 H563 M560.5 402.5 H563 M560.5 397.5 H563 M560.5 392.5 H563 M560.5 387.5 H563 M560.5 383.5 H563 M560.5 378.5 H563 M560.5 373.5 H563 M560.5 369.5 H563 M560.5 364.5 H563 M560.5 359.5 H563 M560.5 354.5 H563 M560.5 350.5 H563 M560.5 345.5 H563 M560.5 340.5 H563 M560.5 336.5 H563 M560.5 331.5 H563 M560.5 326.5 H563 M560.5 322.5 H563 M560.5 317.5 H563 M560.5 312.5 H563 M560.5 307.5 H563 M560.5 303.5 H563 M560.5 298.5 H563 M560.5 293.5 H563 M560.5 289.5 H563 M560.5 284.5 H563 M560.5 279.5 H563 M560.5 274.5 H563 M560.5 270.5 H563 M560.5 265.5 H563 M560.5 260.5 H563 M560.5 256.5 H563 M560.5 251.5 H563 M560.5 246.5 H563 M560.5 242.5 H563 M560.5 237.5 H563 M560.5 232.5 H563 M560.5 227.5 H563 M560.5 223.5 H563 M560.5 218.5 H563 M560.5 213.5 H563 M560.5 209.5 H563 M560.5 204.5 H563 M560.5 199.5 H563 M560.5 194.5 H563 M560.5 190.5 H563 M560.5 185.5 H563 M560.5 180.5 H563 M578.5 496 V501 M593.5 496 V501 M609.5 496 V501 M624.5 496 V501 M639.5 496 V501 M654.5 496 V501 M669.5 496 V501 M685.5 496 V501 M700.5 496 V501 M715.5 496 V501 M730.5 496 V501 M746.5 496 V501 M761.5 496 V501 M776.5 496 V501 M791.5 496 V501 M806.5 496 V501 M822.5 496 V501 M837.5 496 V501 M852.5 496 V501 M867.5 496 V501 M882.5 496 V501 M898.5 496 V501 M913.5 496 V501 M928.5 496 V501 M567.5 496 V499 M570.5 496 V499 M574.5 496 V499 M578.5 496 V499 M582.5 496 V499 M586.5 496 V499 M589.5 496 V499 M593.5 496 V499 M597.5 496 V499 M601.5 496 V499 M605.5 496 V499 M608.5 496 V499 M612.5 496 V499 M616.5 496 V499 M620.5 496 V499 M624.5 496 V499 M627.5 496 V499 M631.5 496 V499 M635.5 496 V499 M639.5 496 V499 M643.5 496 V499 M646.5 496 V499 M650.5 496 V499 M654.5 496 V499 M658.5 496 V499 M662.5 496 V499 M665.5 496 V499 M669.5 496 V499 M673.5 496 V499 M677.5 496 V499 M681.5 496 V499 M685.5 496 V499 M688.5 496 V499 M692.5 496 V499 M696.5 496 V499 M700.5 496 V499 M704.5 496 V499 M707.5 496 V499 M711.5 496 V499 M715.5 496 V499 M719.5 496 V499 M723.5 496 V499 M726.5 496 V499 M730.5 496 V499 M734.5 496 V499 M738.5 496 V499 M742.5 496 V499 M745.5 496 V499 M749.5 496 V499 M753.5 496 V499 M757.5 496 V499 M761.5 496 V499 M764.5 496 V499 M768.5 496 V499 M772.5 496 V499 M776.5 496 V499 M780.5 496 V499 M783.5 496 V499 M787.5 496 V499 M791.5 496 V499 M795.5 496 V499 M799.5 496 V499 M802.5 496 V499 M806.5 496 V499 M810.5 496 V499 M814.5 496 V499 M818.5 496 V499 M821.5 496 V499 M825.5 496 V499 M829.5 496 V499 M833.5 496 V499 M837.5 496 V499 M840.5 496 V499 M844.5 496 V499 M848.5 496 V499 M852.5 496 V499 M856.5 496 V499 M860.5 496 V499 M863.5 496 V499 M867.5 496 V499 M871.5 496 V499 M875.5 496 V499 M879.5 496 V499 M882.5 496 V499 M886.5 496 V499 M890.5 496 V499 M894.5 496 V499 M898.5 496 V499 M901.5 496 V499 M905.5 496 V499 M909.5 496 V499 M913.5 496 V499 M917.5 496 V499 M920.5 496 V499 M924.5 496 V499 M928.5 496 V499 M932.5 496 V499" stroke="#808080" stroke-width="1" fill="none" shape-rendering="crispEdges"/>
<path d="M563 175.75 H934" stroke="#000" stroke-width="1.5" fill="none"/>
<path d="M563 175 V497 M562 496 H934 M933 175 V497" stroke="#000" stroke-width="2" fill="none" shape-rendering="crispEdges"/>
<text x="556" y="499.6" text-anchor="end">0</text>
<text x="556" y="480.8" text-anchor="end">0.1</text>
<text x="556" y="462.0" text-anchor="end">0.2</text>
<text x="556" y="443.1" text-anchor="end">0.3</text>
<text x="556" y="424.3" text-anchor="end">0.4</text>
<text x="556" y="405.5" text-anchor="end">0.5</text>
<text x="556" y="386.7" text-anchor="end">0.6</text>
<text x="556" y="367.9" text-anchor="end">0.7</text>
<text x="556" y="349.0" text-anchor="end">0.8</text>
<text x="556" y="330.2" text-anchor="end">0.9</text>
<text x="556" y="311.4" text-anchor="end">1</text>
<text x="556" y="292.6" text-anchor="end">1.1</text>
<text x="556" y="273.8" text-anchor="end">1.2</text>
<text x="556" y="254.9" text-anchor="end">1.3</text>
<text x="556" y="236.1" text-anchor="end">1.4</text>
<text x="556" y="217.3" text-anchor="end">1.5</text>
<text x="556" y="198.5" text-anchor="end">1.6</text>
<text x="593.5" y="514" text-anchor="middle">63</text>
<text x="639.5" y="514" text-anchor="middle">125</text>
<text x="685.5" y="514" text-anchor="middle">250</text>
<text x="730.5" y="514" text-anchor="middle">500</text>
<text x="776.5" y="514" text-anchor="middle">1000</text>
<text x="822.5" y="514" text-anchor="middle">2000</text>
<text x="867.5" y="514" text-anchor="middle">4000</text>
<text x="913.5" y="514" text-anchor="middle">8000</text>
<text x="747" y="528" text-anchor="middle">frequency (Hz)</text>
<text transform="translate(535 336) rotate(-90)" text-anchor="middle">Sound Absorption Coefficient</text>
<polyline points="578.5,486.4 593.5,485.3 609.5,483.3 624.5,479.2 639.5,475.4 654.5,467.4 669.5,455.3 685.5,439.2 700.5,431.2 715.5,419.2 730.5,422.4 746.5,440.2 761.5,463.5 776.5,476.1 791.5,483.2 806.5,487.4 822.5,487.4 837.5,474.3 852.5,475.3 867.5,492.2 882.5,490.3 898.5,491.3 913.5,485.2 928.5,490.3" fill="none" stroke="#0000ff" stroke-width="1.1"/>
<circle cx="578.5" cy="486.4" r="1.75" fill="#000070"/>
<circle cx="593.5" cy="485.3" r="1.75" fill="#000070"/>
<circle cx="609.5" cy="483.3" r="1.75" fill="#000070"/>
<circle cx="624.5" cy="479.2" r="1.75" fill="#000070"/>
<circle cx="639.5" cy="475.4" r="1.75" fill="#000070"/>
<circle cx="654.5" cy="467.4" r="1.75" fill="#000070"/>
<circle cx="669.5" cy="455.3" r="1.75" fill="#000070"/>
<circle cx="685.5" cy="439.2" r="1.75" fill="#000070"/>
<circle cx="700.5" cy="431.2" r="1.75" fill="#000070"/>
<circle cx="715.5" cy="419.2" r="1.75" fill="#000070"/>
<circle cx="730.5" cy="422.4" r="1.75" fill="#000070"/>
<circle cx="746.5" cy="440.2" r="1.75" fill="#000070"/>
<circle cx="761.5" cy="463.5" r="1.75" fill="#000070"/>
<circle cx="776.5" cy="476.1" r="1.75" fill="#000070"/>
<circle cx="791.5" cy="483.2" r="1.75" fill="#000070"/>
<circle cx="806.5" cy="487.4" r="1.75" fill="#000070"/>
<circle cx="822.5" cy="487.4" r="1.75" fill="#000070"/>
<circle cx="837.5" cy="474.3" r="1.75" fill="#000070"/>
<circle cx="852.5" cy="475.3" r="1.75" fill="#000070"/>
<circle cx="867.5" cy="492.2" r="1.75" fill="#000070"/>
<circle cx="882.5" cy="490.3" r="1.75" fill="#000070"/>
<circle cx="898.5" cy="491.3" r="1.75" fill="#000070"/>
<circle cx="913.5" cy="485.2" r="1.75" fill="#000070"/>
<circle cx="928.5" cy="490.3" r="1.75" fill="#000070"/>
<defs><filter id="lshadow" x="-5%" y="-30%" width="110%" height="160%"><feGaussianBlur stdDeviation="0.9"/></filter></defs>
<rect x="569.5" y="549.5" width="341" height="18.3" fill="#000" filter="url(#lshadow)"/>
<rect x="566.5" y="546.5" width="341" height="18" fill="#fff" stroke="#000" stroke-width="1"/>
<path d="M572 555.5 H589" stroke="#0000ff" stroke-width="1.1"/><circle cx="580.4" cy="555.4" r="1.7" fill="#000060"/>
<text x="596.3" y="558.6" letter-spacing="-0.17">random incidence</text>
<path d="M684 555.5 H701" stroke="#ff0000" stroke-width="1.1"/><circle cx="692.4" cy="555.4" r="1.7" fill="#800000"/>
<text x="707.8" y="558.6" letter-spacing="-0.17">normal incidence</text>
<circle cx="803.8" cy="555.2" r="2.5" fill="#008000" stroke="#003800" stroke-width="0.8"/>
<text x="820" y="558.6" letter-spacing="-0.1">reference</text>
</svg>
<!--/RIGHT-->
</body></html>
